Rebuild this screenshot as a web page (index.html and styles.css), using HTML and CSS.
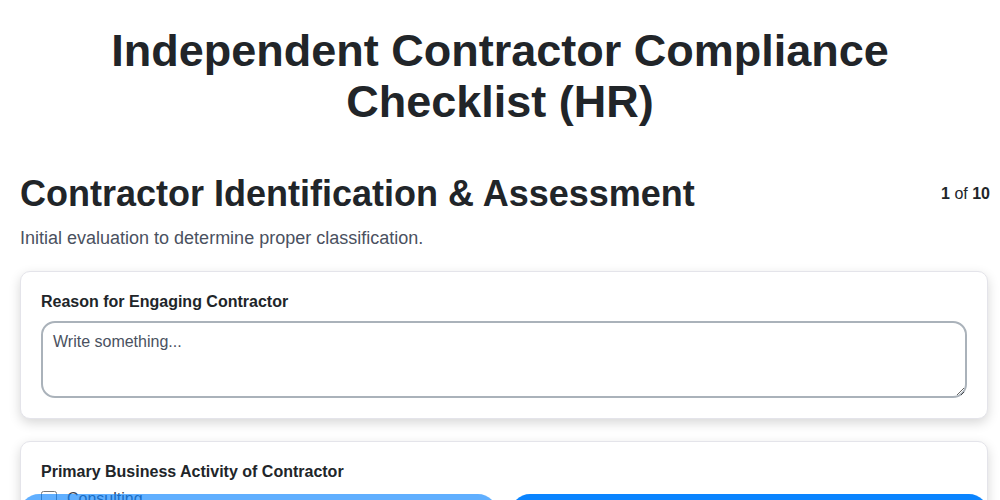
FILE: index.html
```html
<!DOCTYPE html>
<html lang="en">
<head>
<meta charset="utf-8">
<title>Independent Contractor Compliance Checklist (HR)</title>
<link rel="stylesheet" href="styles.css">
</head>
<body>
<main class="page">
  <h1 class="title">Independent Contractor Compliance Checklist (HR)</h1>
  <section class="step">
    <div class="step-head">
      <h2 class="step-title">Contractor Identification &amp; Assessment</h2>
      <div class="step-count"><b>1</b> of <b>10</b></div>
    </div>
    <p class="step-desc">Initial evaluation to determine proper classification.</p>
    <div class="card">
      <label class="field-label" for="reason">Reason for Engaging Contractor</label>
      <textarea id="reason" class="textarea" placeholder="Write something..."></textarea>
    </div>
    <div class="card">
      <div class="field-label">Primary Business Activity of Contractor</div>
      <label class="check"><input type="checkbox"><span>Consulting</span></label>
      <label class="check"><input type="checkbox"><span>Software Development</span></label>
      <label class="check"><input type="checkbox"><span>Design</span></label>
    </div>
  </section>
</main>
<nav class="nav">
  <button class="btn btn-prev" disabled>Previous</button>
  <button class="btn btn-next">Next</button>
</nav>
</body>
</html>
```
FILE: styles.css
```css
* { box-sizing: border-box; }
html, body { margin: 0; padding: 0; background: #fff; }
body {
  font-family: "Liberation Sans", Arial, sans-serif;
  color: #1f2328;
  overflow: hidden;
}
.page { padding: 0 10px 0 20px; }
.title {
  margin: 25px 10px 0 0;
  text-align: center;
  font-size: 45px;
  line-height: 51px;
  font-weight: 700;
  color: #212529;
}
.step { margin-top: 45px; }
.step-head {
  display: flex;
  justify-content: space-between;
  align-items: center;
}
.step-title {
  margin: 0;
  font-size: 36px;
  line-height: 44px;
  font-weight: 700;
  color: #212529;
}
.step-count { font-size: 16px; color: #212529; }
.step-desc {
  margin: 10px 0 0;
  font-size: 18px;
  line-height: 24px;
  color: #4a5160;
}
.card {
  margin: 21px 2px 0 0;
  padding: 20px 20px 20px;
  border: 1px solid #e4e4ea;
  border-radius: 10px;
  background: #fff;
  box-shadow: 0 4px 12px rgba(0, 0, 0, 0.16);
}
.card + .card { margin-top: 22px; }
.field-label {
  display: block;
  font-size: 16px;
  font-weight: 700;
  line-height: 20px;
  color: #212529;
}
.textarea {
  display: block;
  width: 100%;
  height: 77px;
  margin-top: 9px;
  padding: 10px 10px;
  border: 2px solid #aab2ba;
  border-radius: 14px;
  font-family: "Liberation Sans", Arial, sans-serif;
  font-size: 16px;
  color: #212529;
  resize: vertical;
  outline: none;
}
.textarea::placeholder { color: #4a5160; }
.check {
  display: flex;
  align-items: center;
  gap: 10px;
  margin-top: 8px;
  font-size: 16px;
  color: #3a4150;
}
.check input {
  width: 16px;
  height: 16px;
  margin: 0;
}
.nav {
  position: fixed;
  left: 20px;
  right: 12px;
  bottom: -32px;
  display: flex;
  gap: 14px;
}
.btn {
  flex: 1;
  height: 38px;
  border: none;
  border-radius: 19px;
  background: #0a84ff;
  color: #fff;
  font-family: "Liberation Sans", Arial, sans-serif;
  font-size: 16px;
  font-weight: 700;
}
.btn-prev { opacity: 0.65; }
```
